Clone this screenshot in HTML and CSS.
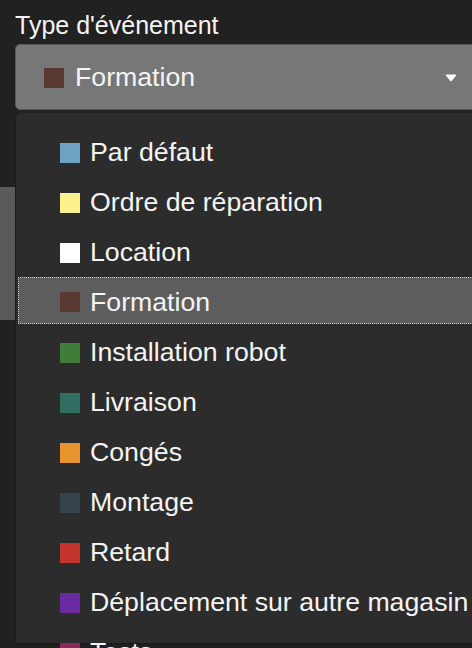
FILE: index.html
```html
<!DOCTYPE html>
<html lang="fr">
<head>
<meta charset="utf-8">
<title>Type d'événement</title>
<link rel="stylesheet" href="styles.css">
</head>
<body>
<div class="page">
  <div class="field-label">Type d'événement</div>
  <div class="field">
    <div class="select">
      <span class="swatch sw-formation"></span>
      <span class="select-text">Formation</span>
      <svg class="caret" width="12" height="8" viewBox="0 0 12 8"><path d="M1.2 0.5 H10.8 Q11.8 0.5 11.1 1.4 L6.7 7.1 Q6 7.9 5.3 7.1 L0.9 1.4 Q0.2 0.5 1.2 0.5 Z" fill="#ffffff"/></svg>
    </div>
    <ul class="menu">
      <li class="item"><span class="swatch sw-defaut"></span>Par défaut</li>
      <li class="item"><span class="swatch sw-ordre"></span>Ordre de réparation</li>
      <li class="item"><span class="swatch sw-location"></span>Location</li>
      <li class="item item-active"><span class="swatch sw-formation"></span>Formation</li>
      <li class="item"><span class="swatch sw-robot"></span>Installation robot</li>
      <li class="item"><span class="swatch sw-livraison"></span>Livraison</li>
      <li class="item"><span class="swatch sw-conges"></span>Congés</li>
      <li class="item"><span class="swatch sw-montage"></span>Montage</li>
      <li class="item"><span class="swatch sw-retard"></span>Retard</li>
      <li class="item"><span class="swatch sw-deplacement"></span>Déplacement sur autre magasin</li>
      <li class="item item-peek"><span class="swatch sw-tests"></span>Tests</li>
    </ul>
  </div>
  <div class="behind"></div>
</div>
</body>
</html>
```

FILE: styles.css
```css
html, body {
  margin: 0;
  padding: 0;
  background: #212121;
  overflow: hidden;
  width: 472px;
  height: 648px;
}

.page {
  padding: 11px 0 0 15px;
  font-family: "Liberation Sans", Arial, sans-serif;
  color: #f4f4f4;
}

.field-label {
  font-size: 25px;
  line-height: 28px;
  margin-bottom: 5px;
}

.field {
  position: relative;
  width: 472px;
}

.select {
  box-sizing: border-box;
  height: 66px;
  background: #777777;
  border: 1px solid #575757;
  border-radius: 5px;
  display: flex;
  align-items: center;
  padding: 1px 0 0 28px;
  font-size: 26.7px;
}

.select .swatch {
  margin-right: 11px;
}

.select-text {
  flex: 1;
}

.caret {
  margin-right: 29px;
}

.swatch {
  display: inline-block;
  width: 20px;
  height: 20px;
  flex: none;
}

.menu {
  position: absolute;
  top: 69px;
  left: 0;
  box-sizing: border-box;
  width: 472px;
  height: 532px;
  margin: 0;
  padding: 16px 2px 0 2px;
  list-style: none;
  background: #2c2c2c;
  border-left: 1px solid #1b1b1b;
  border-bottom: 2px solid #1a1a1a;
  border-radius: 6px 0 0 0;
  z-index: 2;
}

.item {
  box-sizing: border-box;
  height: 47px;
  margin-bottom: 3px;
  display: flex;
  align-items: center;
  padding-left: 41px;
  border: 1px dotted transparent;
  font-size: 26.7px;
  white-space: nowrap;
}

.item .swatch {
  margin-right: 10px;
}

.item-active {
  background: #5e5e5e;
  border-color: #c9c9c9;
  margin-top: -2px;
  margin-bottom: 5px;
  padding-top: 3px;
}

.item-peek {
  margin-top: 3px;
}

.behind {
  margin-top: 77px;
  margin-left: -15px;
  width: 120px;
  height: 133px;
  background: #5a5a5a;
  border-radius: 0 4px 4px 0;
}

.sw-defaut { background: #6fa3c4; }
.sw-ordre { background: #fbf28e; }
.sw-location { background: #ffffff; }
.sw-formation { background: #5a3932; }
.sw-robot { background: #3f7d38; }
.sw-livraison { background: #2f6e60; }
.sw-conges { background: #e8932e; }
.sw-montage { background: #36454d; }
.sw-retard { background: #c4352d; }
.sw-deplacement { background: #6a2aa0; }
.sw-tests { background: #8a2a5c; }
```
